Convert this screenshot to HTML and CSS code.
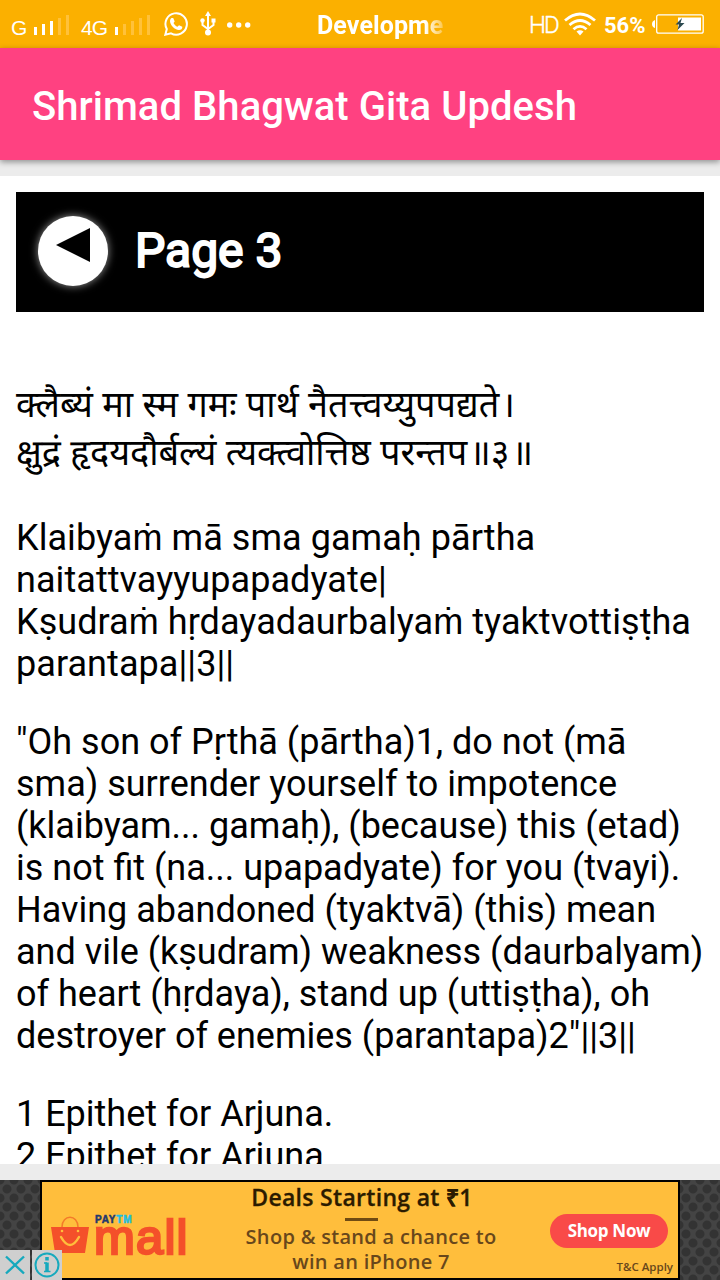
FILE: index.html
```html
<!DOCTYPE html>
<html lang="en">
<head>
    <meta charset="UTF-8">
    <meta name="viewport" content="width=device-width, initial-scale=1.0">
    <title>Shrimad Bhagwat Gita Updesh</title>
    <link rel="stylesheet" href="styles.css">
</head>
<body>
    <div class="status-bar">
        <div class="status-left">
            <span class="network net-g">G</span>
            <svg class="signal-g" width="38" height="24" viewBox="0 0 38 24">
                <path fill="#fff" d="M1 15h3v8H1zM9 12h3v11H9zM17 9h3v14h-3z"/>
                <path fill="#ffc13a" d="M25 6h3v17h-3zM33 3h3v20h-3z"/>
            </svg>
            <span class="network net-4g">4G</span>
            <svg class="signal-4g" width="38" height="24" viewBox="0 0 38 24">
                <path fill="#fff" d="M1 15h3v8H1z"/>
                <path fill="#ffc13a" d="M9 12h3v11H9zM17 9h3v14h-3zM25 6h3v17h-3zM33 3h3v20h-3z"/>
            </svg>
            <svg class="whatsapp" width="24" height="24" viewBox="0 0 24 24">
                <path fill="none" stroke="#fff" stroke-width="2" d="M1.300 22.700l1.500-5.600A10.700 10.700 0 1 1 7 21.300z"/>
                <path fill="#fff" d="M7.600 6h1.600l1.500 3.400-1.200 1.600c1 2 2.200 3 4 3.800l1.500-1.600 3.300 1.600c.3 2-1.400 3.400-3.500 3.300-4.200-.5-8.500-4.700-8.800-8.800C6 7.800 6.700 6.600 7.600 6z"/>
            </svg>
            <svg class="usb" width="16" height="25" viewBox="0 0 16 25">
                <path fill="none" stroke="#fff" stroke-width="2" d="M8 3v18M2.500 10v4L8 18l5.500-4v-4"/>
                <path fill="#fff" d="M8 0l3 5H5zM11.500 7.500h4v4h-4z"/>
                <circle fill="#fff" cx="2.500" cy="9.500" r="2.200"/>
                <circle fill="#fff" cx="8" cy="21.500" r="3"/>
            </svg>
            <svg class="more" width="24" height="6" viewBox="0 0 24 6">
                <circle fill="#fff" cx="2.700" cy="3" r="2.700"/>
                <circle fill="#fff" cx="11.700" cy="3" r="2.700"/>
                <circle fill="#fff" cx="20.700" cy="3" r="2.700"/>
            </svg>
        </div>
        <div class="ticker">Developme</div>
        <div class="status-right">
            <span class="hd">HD</span>
            <svg class="wifi" width="32" height="24" viewBox="0 0 32 24">
                <g fill="none" stroke="#fff" stroke-width="2.800">
                    <path d="M1 8.500Q16-4.500 31 8.500"/>
                    <path d="M5.500 13Q16 4 26.500 13"/>
                    <path d="M9.500 17.200Q16 11.500 22.500 17.200"/>
                </g>
                <path fill="#fff" d="M12.500 19.500q3.500-2.500 7 0L16 23.500z"/>
            </svg>
            <span class="percent">56%</span>
            <svg class="battery" width="53" height="20" viewBox="0 0 53 20">
                <path fill="#fff" d="M3 6v8q-3-1-3-4t3-4zM26 3.500h23v13H26z"/>
                <rect fill="none" stroke="#fff" stroke-width="1.300" x="4.700" y=".8" width="46.500" height="18.400" rx="2"/>
                <path fill="#2c4a50" d="M30 4l-6.500 6.500h3.500l-1.500 5.500 7-7h-4z"/>
            </svg>
        </div>
    </div>

    <div class="toolbar">Shrimad Bhagwat Gita Updesh</div>

    <div class="content">
        <div class="page-heading">
            <a href="#" class="back-button" aria-label="Back">
                <svg width="34" height="34" viewBox="0 0 34 34"><path d="M0 17L34 0v34z"/></svg>
            </a>
            <span class="page-title">Page 3</span>
        </div>
        <p class="shlok" lang="sa">
            क्लैब्यं मा स्म गमः पार्थ नैतत्त्वय्युपपद्यते<span class="danda">।</span><br>
            क्षुद्रं हृदयदौर्बल्यं त्यक्&zwj;त्वोत्तिष्ठ परन्तप<span class="danda">॥</span>३<span class="danda">॥</span>
        </p>
        <p class="translit">
            Klaibyaṁ mā sma gamaḥ pārtha<br>
            naitattvayyupapadyate|<br>
            Kṣudraṁ hṛdayadaurbalyaṁ tyaktvottiṣṭha<br>
            parantapa||3||
        </p>
        <p>
            "Oh son of Pṛthā (pārtha)1, do not (mā<br>
            sma) surrender yourself to impotence<br>
            (klaibyam... gamaḥ), (because) this (etad)<br>
            is not fit (na... upapadyate) for you (tvayi).<br>
            Having abandoned (tyaktvā) (this) mean<br>
            and vile (kṣudram) weakness (daurbalyam)<br>
            of heart (hṛdaya), stand up (uttiṣṭha), oh<br>
            destroyer of enemies (parantapa)2"||3||
        </p>
        <p>
            1 Epithet for Arjuna.<br>
            2 Epithet for Arjuna.
        </p>
    </div>

    <div class="ad-strip">
        <div class="ad-banner">
            <div class="ad-logo">
                <svg width="38" height="38" viewBox="0 0 38 38">
                    <path fill="none" stroke="#f47a2a" stroke-width="1.500" d="M11 11C11-2 27-2 27 11"/>
                    <path fill="#f4502a" d="M0 11h38l-4 26H4z"/>
                    <path fill="none" stroke="#ffbe3c" stroke-width="2.500" stroke-linecap="round" d="M10 21q9 16 18 0"/>
                    <circle fill="#ffbe3c" cx="11" cy="15" r="1.300"/>
                    <circle fill="#ffbe3c" cx="27" cy="15" r="1.300"/>
                </svg>
                <div class="brand">
                    <span class="brand-top">PAY<b>TM</b></span>
                    <span class="brand-name">mall</span>
                </div>
            </div>
            <div class="ad-text">
                <div class="ad-headline">Deals Starting at ₹1</div>
                <div class="ad-line"></div>
                <div class="ad-copy">Shop &amp; stand a chance to<br>win an iPhone 7</div>
            </div>
            <div class="ad-action">
                <div class="shop-button">Shop Now</div>
                <div class="terms">T&amp;C Apply</div>
            </div>
        </div>
        <div class="ad-controls">
            <svg width="30" height="30" viewBox="0 0 30 30">
                <path fill="none" stroke="#16a9bd" stroke-width="2.400" d="M6 6.500l18 17M24 6.500l-18 17"/>
            </svg>
            <svg width="30" height="30" viewBox="0 0 30 30">
                <g fill="none" stroke="#16a9bd">
                    <circle stroke-width="2" cx="15" cy="15" r="11.500"/>
                    <path stroke-width="3.500" d="M15 7v3.500M15 12.500V22"/>
                    <path stroke-width="1.500" d="M12 13h3M12 21.500h6.500"/>
                </g>
            </svg>
        </div>
    </div>
</body>
</html>
```
FILE: styles.css
```css
body {
    margin: 0;
    width: 720px;
    height: 1280px;
    overflow: hidden;
    display: flex;
    flex-direction: column;
    background-color: #ececec;
    font-family: Roboto, sans-serif;
}
svg {
    display: block;
    flex-shrink: 0;
}
.status-bar {
    display: flex;
    height: 48px;
    flex-shrink: 0;
    background-color: #fbb000;
    color: #fff;
    white-space: nowrap;
}
.status-left {
    display: flex;
    width: 317px;
    align-items: flex-start;
}
.network {
    font-family: "Liberation Sans", sans-serif;
    font-size: 21px;
    line-height: 24px;
    margin-top: 16px;
}
.net-g {
    width: 22px;
    padding-left: 11px;
}
.signal-g, .signal-4g {
    margin-top: 12px;
}
.net-4g {
    width: 33px;
    padding-left: 10px;
    letter-spacing: -1px;
}
.whatsapp {
    margin: 12px 0 0 12px;
}
.usb {
    margin: 11px 0 0 12px;
}
.more {
    margin: 22px 0 0 11px;
}
.ticker {
    width: 212px;
    font-size: 25px;
    font-weight: bold;
    line-height: 52px;
    letter-spacing: 0.1px;
    -webkit-mask-image: linear-gradient(90deg, #000 108px, transparent 134px);
    mask-image: linear-gradient(90deg, #000 108px, transparent 134px);
}
.status-right {
    display: flex;
}
.hd {
    width: 35px;
    font-size: 24px;
    font-weight: 300;
    line-height: 50px;
    letter-spacing: -2px;
    -webkit-text-stroke: 0.4px #fff;
}
.wifi {
    margin-top: 12px;
}
.percent {
    width: 48px;
    margin-left: 8px;
    font-size: 22px;
    font-weight: bold;
    line-height: 52px;
}
.battery {
    margin-top: 14px;
}
.toolbar {
    height: 112px;
    flex-shrink: 0;
    padding-left: 32px;
    box-sizing: border-box;
    background-color: #ff4181;
    color: #fff;
    font-size: 40px;
    font-weight: 500;
    line-height: 118px;
    letter-spacing: 0.05px;
    box-shadow: 0 2px 6px rgba(0, 0, 0, 0.4);
}
.content {
    height: 988px;
    flex-shrink: 0;
    margin-top: 16px;
    padding: 16px;
    box-sizing: border-box;
    overflow: hidden;
    background-color: #fff;
}
.content p {
    margin: 0 0 36px;
    font-size: 36px;
    line-height: 42px;
    white-space: nowrap;
    color: #000;
}
.content .shlok {
    margin-bottom: 35px;
    font-family: "Noto Sans Devanagari", "Noto Sans", sans-serif;
    line-height: 48px;
}
.danda {
    margin-left: 2px;
}
.content .translit {
    letter-spacing: 0.06px;
}
.page-heading {
    display: flex;
    align-items: center;
    height: 120px;
    margin-bottom: 73px;
    padding-left: 22px;
    background-color: #000;
    color: #fff;
}
.page-heading + .shlok {
    padding-bottom: 1px;
}
.back-button {
    width: 70px;
    height: 70px;
    margin-bottom: 2px;
    padding: 12px 0 0 18px;
    box-sizing: border-box;
    border-radius: 50%;
    background-color: #fff;
    box-shadow: 0 0 8px rgba(255, 255, 255, 0.6);
}
.page-title {
    margin: 0 0 2px 27px;
    font-size: 48px;
    font-weight: 400;
    line-height: 56px;
    -webkit-text-stroke: 2px #fff;
}
.ad-strip {
    display: flex;
    justify-content: center;
    position: relative;
    height: 100px;
    margin-top: 16px;
    flex-shrink: 0;
    background-color: #444;
    background-image: radial-gradient(circle, #333 4px, transparent 5px), radial-gradient(circle, #333 4px, transparent 5px);
    background-size: 14px 18px;
    background-position: 0 0, 7px 9px;
}
.ad-banner {
    display: flex;
    width: 640px;
    height: 100px;
    box-sizing: border-box;
    border: 2px solid #000;
    background-color: #ffbe3c;
    font-family: "Open Sans", sans-serif;
    white-space: nowrap;
}
.ad-logo {
    display: flex;
    width: 189px;
    padding: 34px 0 0 9px;
    box-sizing: border-box;
}
.brand {
    display: flex;
    flex-direction: column;
    margin-left: 5px;
    font-family: "Liberation Sans", sans-serif;
    font-weight: bold;
}
.brand-top {
    margin-left: 1px;
    color: #23386d;
    font-size: 10px;
    line-height: 8px;
    letter-spacing: 0.8px;
    -webkit-text-stroke: 0.5px;
}
.brand-top b {
    color: #20bfe0;
}
.brand-name {
    margin-top: -10px;
    color: #f4502a;
    font-size: 49px;
    font-weight: normal;
    line-height: 46px;
    letter-spacing: 1.2px;
    -webkit-text-stroke: 2.5px #f4502a;
}
.ad-text {
    width: 280px;
    text-align: center;
}
.ad-headline {
    margin-left: -18px;
    color: #2b1b00;
    font-size: 23px;
    font-weight: 600;
    line-height: 30px;
    letter-spacing: 0.3px;
    -webkit-text-stroke: 0.3px #2b1b00;
}
.ad-line {
    width: 33px;
    height: 3px;
    margin: 6px 0 0 114px;
    background-color: #704b12;
}
.ad-copy {
    margin-top: 3px;
    color: #68471b;
    font-size: 20px;
    font-weight: 600;
    line-height: 25px;
    letter-spacing: 0.3px;
}
.ad-action {
    display: flex;
    flex-direction: column;
    width: 167px;
    padding-top: 32px;
}
.shop-button {
    width: 118px;
    height: 34px;
    margin-left: 39px;
    border-radius: 17px;
    background-color: #f94a48;
    color: #fff;
    font-size: 17px;
    font-weight: bold;
    line-height: 33px;
    letter-spacing: -0.3px;
    text-align: center;
}
.terms {
    margin: 10px 5px 0 0;
    color: #68471b;
    font-size: 11.5px;
    font-weight: 600;
    line-height: 18px;
    text-align: right;
}
/* Ad close and info buttons sit on top of the banner */
.ad-controls {
    position: absolute;
    left: 0;
    bottom: 0;
    display: flex;
    gap: 2px;
}
.ad-controls svg {
    background-color: #cfcfcf;
}
```
